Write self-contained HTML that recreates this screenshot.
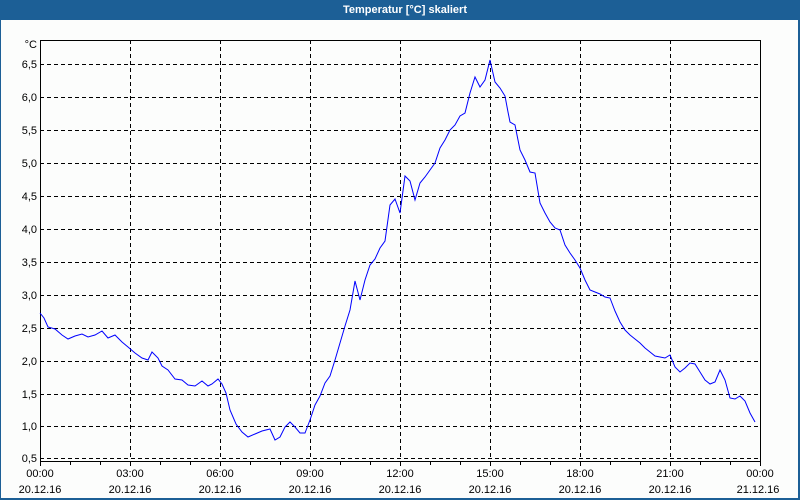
<!DOCTYPE html>
<html><head><meta charset="utf-8"><style>
html,body{margin:0;padding:0;background:#fff}
svg{display:block}
text{font-family:"Liberation Sans",sans-serif;font-size:11px;fill:#000}
</style></head><body>
<svg width="800" height="500" xmlns="http://www.w3.org/2000/svg">
<rect x="0" y="0" width="800" height="500" fill="#1c5f96"/>
<rect x="1" y="20" width="797" height="478" fill="#fcfdfc"/>
<text x="405" y="13" text-anchor="middle" style="fill:#fff;font-weight:bold;font-size:11px">Temperatur [°C] skaliert</text>
<g stroke="#000" stroke-width="1" stroke-dasharray="4,3" fill="none" shape-rendering="crispEdges">
<path d="M130.5 40V460M220.5 40V460M310.5 40V460M400.5 40V460M490.5 40V460M580.5 40V460M670.5 40V460"/>
<path d="M40 64.5H760M40 97.5H760M40 130.5H760M40 163.5H760M40 196.5H760M40 229.5H760M40 262.5H760M40 295.5H760M40 328.5H760M40 361.5H760M40 394.5H760M40 426.5H760M40 458.5H760"/>
</g>
<g stroke="#000" fill="none" shape-rendering="crispEdges">
<path d="M40.5 40.5H760.5V461.5H40.5Z"/>
<path d="M40.5 461V466M70.5 461V465M100.5 461V465M130.5 461V466M160.5 461V465M190.5 461V465M220.5 461V466M250.5 461V465M280.5 461V465M310.5 461V466M340.5 461V465M370.5 461V465M400.5 461V466M430.5 461V465M460.5 461V465M490.5 461V466M520.5 461V465M550.5 461V465M580.5 461V466M610.5 461V465M640.5 461V465M670.5 461V466M700.5 461V465M730.5 461V465M760.5 461V466"/>
</g>
<g text-anchor="end">
<text x="37" y="48">°C</text>
<text x="37" y="68">6,5</text><text x="37" y="101">6,0</text><text x="37" y="134">5,5</text><text x="37" y="167">5,0</text><text x="37" y="200">4,5</text><text x="37" y="233">4,0</text><text x="37" y="266">3,5</text><text x="37" y="299">3,0</text><text x="37" y="332">2,5</text><text x="37" y="365">2,0</text><text x="37" y="398">1,5</text><text x="37" y="430">1,0</text><text x="37" y="462">0,5</text>
</g>
<g text-anchor="middle">
<text x="40" y="477">00:00</text><text x="40" y="493">20.12.16</text>
<text x="130" y="477">03:00</text><text x="130" y="493">20.12.16</text>
<text x="220" y="477">06:00</text><text x="220" y="493">20.12.16</text>
<text x="310" y="477">09:00</text><text x="310" y="493">20.12.16</text>
<text x="400" y="477">12:00</text><text x="400" y="493">20.12.16</text>
<text x="490" y="477">15:00</text><text x="490" y="493">20.12.16</text>
<text x="580" y="477">18:00</text><text x="580" y="493">20.12.16</text>
<text x="670" y="477">21:00</text><text x="670" y="493">20.12.16</text>
<text x="760" y="477">00:00</text><text x="758" y="493">21.12.16</text>
</g>
<polyline fill="none" stroke="#0000ff" stroke-width="1" points="40,313 44,318 48,327 55,329 62,335 68,339 75,336 82,334 88,337 95,335 102,331 108,338 115,335 122,342 128,347 135,353 142,358 148,360 152,352 158,358 162,366 168,370 175,379 182,380 188,385 195,386 202,381 208,386 212,384 218,379 222,384 226,393 230,410 236,424 242,432 248,437 255,434 262,431 270,429 275,440 280,437 285,427 290,422 295,427 300,433 305,433 310,420 315,405 320,396 325,383 330,376 335,360 340,343 345,326 350,310 355,281 360,300 365,280 370,265 375,259 380,248 385,241 390,205 395,199 400,213 405,176 410,181 415,200 420,183 425,177 430,170 435,163 440,148 445,140 450,130 455,125 460,116 465,113 470,93 475,77 480,87 485,80 490,60 495,82 500,88 505,96 508,112 510,122 515,125 518,140 520,150 525,160 530,172 535,173 540,203 545,213 550,222 555,228 560,230 565,245 570,253 575,260 580,268 585,280 590,290 595,292 600,294 605,297 610,298 615,311 620,322 625,330 630,335 635,339 640,343 645,348 650,352 655,356 660,357 665,358 670,355 675,367 680,372 685,368 690,363 695,364 700,372 705,380 710,384 715,382 720,370 725,380 730,398 735,399 740,396 745,401 750,413 755,422"/>
</svg>
</body></html>
